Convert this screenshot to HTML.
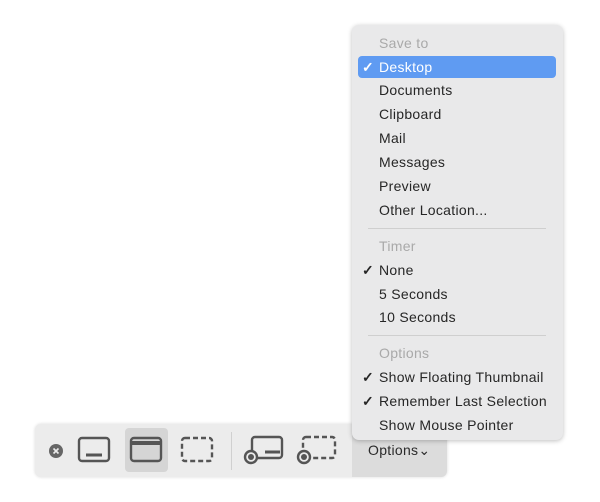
<!DOCTYPE html>
<html><head><style>
body{margin:0;width:600px;height:502px;background:#fff;position:relative;overflow:hidden;font-family:"Liberation Sans",sans-serif;}
.bar{position:absolute;left:35px;top:424px;width:412px;height:53px;background:#ececec;border-radius:6px;box-shadow:0 0 3px rgba(0,0,0,.15);overflow:hidden}
.opt{position:absolute;left:317px;top:0;width:95px;height:53px;background:#dcdcdc}
.menu{position:absolute;left:352px;top:25px;width:211px;height:415px;background:#e9e9ea;border-radius:7px;box-shadow:0 1px 5px rgba(0,0,0,.25);font-size:14px;color:#262626;letter-spacing:0.3px}
.r{position:absolute;left:27px;height:22px;line-height:22px}
.h{color:#a9a9a9}
.c{position:absolute;left:10px;font-size:14px;font-weight:bold}
.sep{position:absolute;left:16px;width:178px;height:1px;background:#cfcfcf}
.sel{position:absolute;left:6px;top:31px;width:198px;height:22px;background:#5f9bf2;border-radius:4px}
</style></head><body>
<div class="bar"><div class="opt"></div>
<div style="position:absolute;left:90px;top:4px;width:43px;height:44px;background:#d5d5d5;border-radius:4px"></div>
<div style="position:absolute;left:196px;top:8px;width:1px;height:38px;background:#d0d0d0"></div>
<svg width="412" height="53" style="position:absolute;left:0;top:0" fill="none" stroke="#555" stroke-width="2.4">
<circle cx="21" cy="27" r="7" fill="#666" stroke="none"/>
<path d="M18.5 24.5l5 5M23.5 24.5l-5 5" stroke="#ececec" stroke-width="1.6"/>
<rect x="44" y="14" width="30" height="23" rx="3"/><path d="M51 31h16" stroke-width="3"/>
<rect x="96" y="14" width="30" height="23" rx="3"/><path d="M96 19h30" stroke-width="4"/>
<rect x="147" y="14" width="30" height="23" rx="3" stroke-dasharray="5 3"/>
<rect x="217" y="13" width="30" height="21" rx="3"/><path d="M230 28h15" stroke-width="3"/>
<circle cx="216" cy="33" r="6" fill="#ececec"/><circle cx="216" cy="33" r="3" fill="#555" stroke="none"/>
<rect x="268" y="13" width="32" height="21" rx="3" stroke-dasharray="5 3"/>
<circle cx="269" cy="33" r="6" fill="#ececec"/><circle cx="269" cy="33" r="3" fill="#555" stroke="none"/>
</svg>
<div style="position:absolute;left:333px;top:18px;font-size:14px;color:#2a2a2a;letter-spacing:0.3px">Options⌄</div>
</div>
<div class="menu">
<div class="sel"></div>
<div class="r h" style="top:7px">Save to</div>
<div class="c" style="top:31px;color:#fff;line-height:22px">✓</div><div class="r" style="top:31px;color:#fff">Desktop</div>
<div class="r" style="top:54px">Documents</div>
<div class="r" style="top:78px">Clipboard</div>
<div class="r" style="top:102px">Mail</div>
<div class="r" style="top:126px">Messages</div>
<div class="r" style="top:150px">Preview</div>
<div class="r" style="top:174px">Other Location...</div>
<div class="sep" style="top:203px"></div>
<div class="r h" style="top:210px">Timer</div>
<div class="c" style="top:234px;line-height:22px">✓</div><div class="r" style="top:234px">None</div>
<div class="r" style="top:258px">5 Seconds</div>
<div class="r" style="top:281px">10 Seconds</div>
<div class="sep" style="top:310px"></div>
<div class="r h" style="top:317px">Options</div>
<div class="c" style="top:341px;line-height:22px">✓</div><div class="r" style="top:341px">Show Floating Thumbnail</div>
<div class="c" style="top:365px;line-height:22px">✓</div><div class="r" style="top:365px">Remember Last Selection</div>
<div class="r" style="top:389px">Show Mouse Pointer</div>
</div>
</body></html>
